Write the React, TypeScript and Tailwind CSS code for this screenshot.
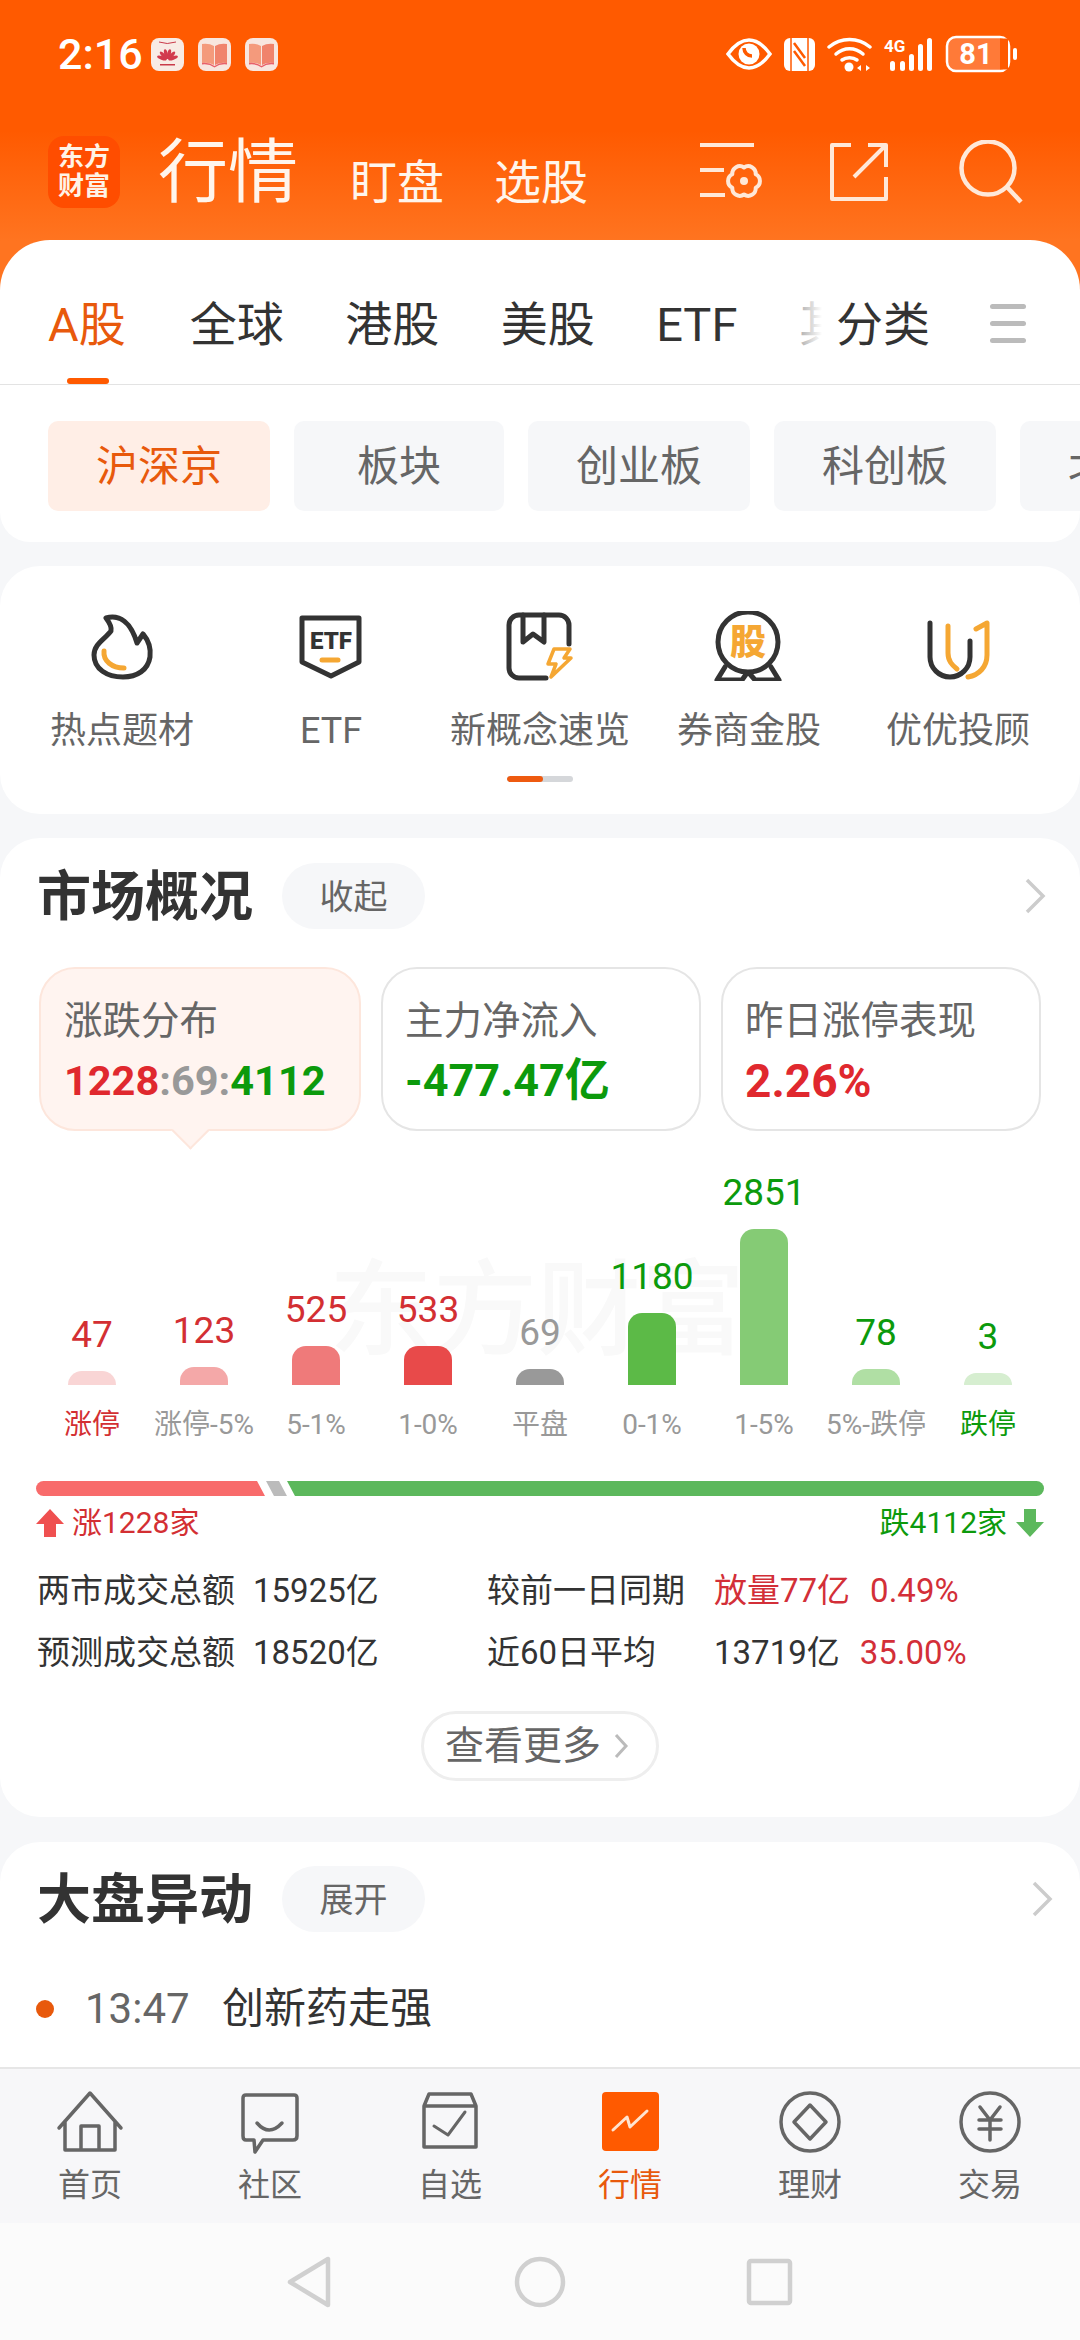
import React from "react";

const TABS = ["全球", "港股", "美股", "ETF", "其他"];
const CHIPS = ["板块", "创业板", "科创板"];

const BARS = [
  { v: "47", l: "涨停", h: 14, bar: "bg-[#f9d5d5]", vc: "text-[#d32f33]", lc: "text-[#d32f33]" },
  { v: "123", l: "涨停-5%", h: 18, bar: "bg-[#f4a8a8]", vc: "text-[#d32f33]", lc: "text-[#999999]" },
  { v: "525", l: "5-1%", h: 39, bar: "bg-[#ef7a7a]", vc: "text-[#d32f33]", lc: "text-[#999999]" },
  { v: "533", l: "1-0%", h: 39, bar: "bg-[#e84a4a]", vc: "text-[#d32f33]", lc: "text-[#999999]" },
  { v: "69", l: "平盘", h: 16, bar: "bg-[#999999]", vc: "text-[#999999]", lc: "text-[#999999]" },
  { v: "1180", l: "0-1%", h: 72, bar: "bg-[#5cba47]", vc: "text-[#0c9a0c]", lc: "text-[#999999]" },
  { v: "2851", l: "1-5%", h: 156, bar: "bg-[#85cb75]", vc: "text-[#0c9a0c]", lc: "text-[#999999]" },
  { v: "78", l: "5%-跌停", h: 16, bar: "bg-[#b0dfa4]", vc: "text-[#0c9a0c]", lc: "text-[#999999]" },
  { v: "3", l: "跌停", h: 12, bar: "bg-[#d6eed0]", vc: "text-[#0c9a0c]", lc: "text-[#0c9a0c]" },
];

const D = "#333333";
const O = "#f5a733";

function Flame() {
  return (
    <svg width="70" height="70" viewBox="0 0 70 70" fill="none" strokeLinecap="round" strokeLinejoin="round">
      <path d="M19 7C33 3 44 12 50 32C52 29 54 26 56 23C62 30 64 38 63 46C61 59 50 66 36 66C20 66 7 58 7 44C7 33 18 28 24 20C25 16 22 11 19 7Z" stroke={D} strokeWidth="5" />
      <path d="M17 40C16 50 25 57 37 57" stroke={O} strokeWidth="5" />
    </svg>
  );
}
function EtfIcon() {
  return (
    <svg width="70" height="70" viewBox="0 0 70 70" fill="none" strokeLinecap="round" strokeLinejoin="round">
      <path d="M6 7H63V51L35 65L6 51Z" stroke={D} strokeWidth="5" />
      <text x="35" y="38" textAnchor="middle" fontSize="24" fontWeight="900" fill={D} fontFamily="Roboto, sans-serif">ETF</text>
      <path d="M26 49H42" stroke={O} strokeWidth="5" />
    </svg>
  );
}
function BookIcon() {
  return (
    <svg width="70" height="70" viewBox="0 0 70 70" fill="none" strokeLinecap="round" strokeLinejoin="round">
      <path d="M64 33V14A10 10 0 0 0 54 4H14A10 10 0 0 0 4 14V57A10 10 0 0 0 14 67H41" stroke={D} strokeWidth="5" />
      <path d="M18 4V31L28 23L39 31V4" stroke={D} strokeWidth="5" />
      <path d="M49 38H65L59 47H66L46 66L51 53H43Z" stroke={O} strokeWidth="3.5" fill="#ffffff" />
    </svg>
  );
}
function BadgeIcon() {
  return (
    <svg width="70" height="70" viewBox="0 0 70 70" fill="none" strokeLinecap="round" strokeLinejoin="round">
      <circle cx="34" cy="31" r="30" stroke={D} strokeWidth="5" />
      <path d="M11 56L3 69H28L33 62M57 56L65 69H41L35 62" stroke={D} strokeWidth="5" />
      <text x="34" y="44" textAnchor="middle" fontSize="36" fontWeight="900" fill={O} fontFamily="'Noto Sans CJK SC', sans-serif">股</text>
    </svg>
  );
}
function UIcon() {
  return (
    <svg width="70" height="70" viewBox="0 0 70 70" fill="none" strokeLinecap="round" strokeLinejoin="round">
      <path d="M25 15V42C25 50 29 54 34 58" stroke={O} strokeWidth="5" />
      <path d="M7 12V46A20 20 0 0 0 47 46V30" stroke={D} strokeWidth="5" />
      <path d="M53 18L64 12V44C64 56 56 64 45 66" stroke={O} strokeWidth="5" />
    </svg>
  );
}

const GRID = [
  { l: "热点题材", I: Flame },
  { l: "ETF", I: EtfIcon },
  { l: "新概念速览", I: BookIcon },
  { l: "券商金股", I: BadgeIcon },
  { l: "优优投顾", I: UIcon },
];

const N = "#666666";
function NavHome() {
  return (
    <svg width="70" height="64" viewBox="0 0 70 64" fill="none" stroke={N} strokeWidth="3.5" strokeLinejoin="round" strokeLinecap="round">
      <path d="M4 38L35 3L66 38M10 31V60H60V31M26 60V36H44V60" />
    </svg>
  );
}
function NavChat() {
  return (
    <svg width="70" height="64" viewBox="0 0 70 64" fill="none" stroke={N} strokeWidth="3.5" strokeLinejoin="round" strokeLinecap="round">
      <path d="M11 5H59Q62 5 62 8V46Q62 50 58 50H28L20 62L19 50H11Q8 50 8 46V8Q8 5 11 5Z" />
      <path d="M22 33Q34 47 47 33" />
    </svg>
  );
}
function NavWatch() {
  return (
    <svg width="70" height="64" viewBox="0 0 70 64" fill="none" stroke={N} strokeWidth="3.5" strokeLinejoin="round" strokeLinecap="round">
      <path d="M9 16H61V57H9ZM9 16L14 4H56L61 16" />
      <path d="M19 36L33 45L50 22" strokeWidth="3" />
    </svg>
  );
}
function NavMarket() {
  return (
    <svg width="70" height="64" viewBox="0 0 70 64" fill="none">
      <rect x="7" y="2" width="57" height="59" rx="4" fill="#ff5a00" />
      <path d="M18 40L32 27L35 37L52 21" stroke="#ffe4d0" strokeWidth="3" strokeLinecap="round" strokeLinejoin="round" />
    </svg>
  );
}
function NavWealth() {
  return (
    <svg width="70" height="64" viewBox="0 0 70 64" fill="none" stroke={N} strokeWidth="3.5" strokeLinejoin="round">
      <circle cx="35" cy="32" r="29" />
      <path d="M35 15L51 32L35 49L19 32Z" />
    </svg>
  );
}
function NavTrade() {
  return (
    <svg width="70" height="64" viewBox="0 0 70 64" fill="none" stroke={N} strokeWidth="3.5" strokeLinejoin="round" strokeLinecap="round">
      <circle cx="35" cy="32" r="29" />
      <path d="M25 17L35 30L45 17M35 30V50M24 30H46M24 39H46" />
    </svg>
  );
}

const NAV = [
  { l: "首页", I: NavHome },
  { l: "社区", I: NavChat },
  { l: "自选", I: NavWatch },
  { l: "行情", I: NavMarket, active: true },
  { l: "理财", I: NavWealth },
  { l: "交易", I: NavTrade },
];

function HuaweiIcon() {
  const angles = [-70, -42, -14, 14, 42, 70];
  return (
    <svg width="33" height="33" viewBox="0 0 33 33">
      <rect width="33" height="33" rx="8" fill="#f8ebe5" />
      <path d="M8 4Q16 7 25 4" stroke="#c93a4a" strokeWidth="1" fill="none" />
      <g transform="translate(16.5 22)">
        {angles.map((a) => (
          <ellipse key={a} cx="0" cy="-6" rx="1.8" ry="5" fill="#d23a4e" transform={`rotate(${a})`} />
        ))}
      </g>
      <rect x="9" y="26" width="15" height="1.5" fill="#c93a4a" />
    </svg>
  );
}
function BookNote() {
  return (
    <svg width="33" height="33" viewBox="0 0 33 33">
      <rect width="33" height="33" rx="8" fill="#f8e6df" />
      <path d="M4 6Q11 5 16 8V27Q11 24 4 25Z" fill="#f49a7c" />
      <path d="M29 6Q22 5 17 8V27Q22 24 29 25Z" fill="#f0836c" />
      <path d="M4 25Q11 24 16.500 28Q22 24 29 25V26.500Q22 25.500 16.500 29.500Q11 25.500 4 26.500Z" fill="#e8606a" />
    </svg>
  );
}

function StatusRight() {
  return (
    <div className="flex items-center">
      <svg width="46" height="32" viewBox="0 0 46 32" fill="none">
        <path d="M2 16C10 5 18 2 23 2C28 2 36 5 44 16C36 27 28 30 23 30C18 30 10 27 2 16Z" stroke="#ffffff" strokeWidth="3.5" />
        <circle cx="23" cy="16" r="10.500" fill="#ffffff" />
        <path d="M18 10A8 8 0 0 0 26 18" stroke="#ff5a00" strokeWidth="3.5" />
      </svg>
      <svg className="ml-[12px]" width="31" height="33" viewBox="0 0 31 33" fill="none">
        <rect width="31" height="33" rx="6" fill="#ffffff" />
        <path d="M7 0V33M24 0V33" stroke="#ff5a00" strokeWidth="1.500" />
        <path d="M10 5L21 20M10 13L21 28" stroke="#ff5a00" strokeWidth="2.500" />
      </svg>
      <svg className="ml-[12px]" width="45" height="36" viewBox="0 0 45 36" fill="none" stroke="#ffffff" strokeLinecap="round">
        <path d="M2 11C14 1 31 1 43 11" strokeWidth="3.500" />
        <path d="M9 18C17 11 28 11 36 18" strokeWidth="3.500" />
        <path d="M15 24C19 21 26 21 30 24" strokeWidth="3.500" />
        <circle cx="22" cy="31" r="4.500" fill="#ffffff" stroke="none" />
        <path d="M34 29L30 32L34 35ZM39 29L43 32L39 35Z" fill="#ffffff" stroke="none" />
      </svg>
      <svg className="ml-[11px]" width="50" height="36" viewBox="0 0 50 36">
        <text x="1" y="16" fontSize="17" fontWeight="700" fill="#ffffff" fontFamily="Roboto, sans-serif">4G</text>
        <rect x="7" y="25" width="5" height="10" rx="2.500" fill="#ffffff" />
        <rect x="17" y="25" width="5" height="10" rx="2.500" fill="#ffffff" />
        <rect x="26" y="18" width="5" height="17" rx="2.500" fill="#ffffff" />
        <rect x="35" y="8" width="5" height="27" rx="2.500" fill="#ffffff" />
        <rect x="44" y="2" width="5" height="33" rx="2.500" fill="#ffffff" />
      </svg>
      <svg className="ml-[12px]" width="73" height="38" viewBox="0 0 73 38" fill="none">
        <rect x="2" y="2" width="62" height="34" rx="9" fill="#ff7a38" stroke="#ffffff" strokeWidth="2.500" />
        <rect x="55" y="3.500" width="8" height="31" fill="#ff5a00" />
        <text x="31" y="29" textAnchor="middle" fontSize="29" fontWeight="700" fill="#ffffff" fontFamily="Roboto, sans-serif">81</text>
        <rect x="68" y="13" width="4" height="12" rx="2" fill="#ffffff" />
      </svg>
    </div>
  );
}

const HC = "#ffe8d8";
function SettingsIcon() {
  return (
    <svg width="62" height="58" viewBox="0 0 62 58" fill="none" stroke={HC} strokeWidth="4">
      <path d="M0 2H54M0 27H24M0 52H25" />
      <path d="M44 24.500A7.500 7.500 0 0 1 55.700 31.250A7.500 7.500 0 0 1 55.700 44.750A7.500 7.500 0 0 1 44 51.500A7.500 7.500 0 0 1 32.300 44.750A7.500 7.500 0 0 1 32.300 31.250A7.500 7.500 0 0 1 44 24.500Z" strokeLinejoin="round" />
      <circle cx="44" cy="38" r="4" fill={HC} stroke="none" />
    </svg>
  );
}
function ShareIcon() {
  return (
    <svg width="58" height="58" viewBox="0 0 58 58" fill="none" stroke={HC} strokeWidth="4" strokeLinejoin="round">
      <path d="M21 2H2V56H56V34" />
      <path d="M38 2H56V24M24 34L55 3" />
    </svg>
  );
}
function SearchIcon() {
  return (
    <svg width="64" height="64" viewBox="0 0 64 64" fill="none" stroke={HC} strokeWidth="4.500">
      <circle cx="29" cy="28" r="26.500" />
      <path d="M48 47L62 62" />
    </svg>
  );
}

function Chevron({ className = "" }: { className?: string }) {
  return (
    <svg className={className} width="22" height="36" viewBox="0 0 22 36" fill="none" stroke="#cccccc" strokeWidth="3.500">
      <path d="M3 2L19 18L3 34" />
    </svg>
  );
}

function SectionHead({ title, pill, chevron }: { title: string; pill: string; chevron: string }) {
  return (
    <div className="flex items-center h-[66px] pl-[37px]">
      <div className="pt-[3px] text-[54px] leading-[66px] font-semibold text-[#333333]">{title}</div>
      <div className="ml-[29px] w-[143px] h-[66px] rounded-full bg-[#f6f7f9] flex items-center justify-center pt-[2px] text-[34px] leading-[64px] text-[#666666]">
        {pill}
      </div>
      <Chevron className={chevron} />
    </div>
  );
}

export default function App() {
  return (
    <div className="w-[1080px] h-[2340px] overflow-hidden flex flex-col bg-[#f6f7f9] [font-family:Roboto,'Noto_Sans_CJK_SC',sans-serif]">
      <div className="flex-1 min-h-0 overflow-hidden">
        {/* header */}
        <div className="h-[290px] bg-[linear-gradient(180deg,#ff5a00_0%,#ff5a00_45%,#ff7420_83%,#ff7420_100%)]">
          <div className="h-[108px] pl-[58px] pr-[62px] flex items-center">
            <div className="text-[43px] leading-[50px] font-medium text-white w-[93px]">2:16</div>
            <div className="flex gap-[14px]">
              <HuaweiIcon />
              <BookNote />
              <BookNote />
            </div>
            <div className="ml-auto">
              <StatusRight />
            </div>
          </div>
          <div className="mt-[28px] h-[72px] pl-[48px] pr-[57px] flex items-center text-[#fff5ec]">
            <div className="w-[72px] h-[72px] rounded-[16px] bg-[#ff4d00] flex items-center justify-center text-center text-[26px] leading-[29px] font-bold text-[#fff3e6]">
              东方<br />财富
            </div>
            <div className="ml-[38px] pt-[2px] text-[70px] leading-[72px]">行情</div>
            <div className="ml-[52px] pt-[22px] text-[47px] leading-[50px]">盯盘</div>
            <div className="ml-[50px] pt-[22px] text-[47px] leading-[50px]">选股</div>
            <div className="ml-auto flex items-center">
              <SettingsIcon />
              <div className="ml-[68px]"><ShareIcon /></div>
              <div className="ml-[71px]"><SearchIcon /></div>
            </div>
          </div>
        </div>

        {/* tabs panel */}
        <div className="relative -mt-[50px] bg-white rounded-t-[50px] rounded-b-[30px] h-[302px] overflow-hidden">
          <div className="h-[145px] border-b-[1px] border-[#e3e3e3] flex pt-[61px] items-start">
            <div className="relative w-[822px] overflow-hidden flex gap-[61.5px] pl-[48px] h-[83px] text-[47px] leading-[48px] text-[#333333]">
              <div className="relative shrink-0 mr-[2.5px] text-[#e8590c] h-[83px]">
                A股
                <div className="absolute left-[19px] bottom-0 w-[42px] h-[6px] rounded-full bg-[#ff5a00]" />
              </div>
              {TABS.map((t) => (
                <div key={t} className="shrink-0">{t}</div>
              ))}
              <div className="absolute right-0 top-0 w-[26px] h-[60px] bg-[linear-gradient(90deg,rgba(255,255,255,0.55),#ffffff)]" />
            </div>
            <div className="ml-[14px] text-[47px] leading-[48px] text-[#333333]">分类</div>
            <div className="ml-[60px] mt-[3px] w-[36px] flex flex-col gap-[12px]">
              <div className="h-[5px] rounded-full bg-[#bbbbbb]" />
              <div className="h-[5px] rounded-full bg-[#bbbbbb]" />
              <div className="h-[5px] rounded-full bg-[#bbbbbb]" />
            </div>
          </div>
          <div className="pt-[36px] pl-[48px] flex gap-[24px] text-[42px] text-[#666666]">
            <div className="shrink-0 w-[222px] h-[90px] rounded-[10px] bg-[#ffeee6] text-[#e8590c] flex items-center justify-center">沪深京</div>
            {CHIPS.map((c, i) => (
              <div
                key={c}
                className={
                  i === 0
                    ? "shrink-0 w-[210px] h-[90px] rounded-[10px] bg-[#f6f7f9] flex items-center justify-center"
                    : "shrink-0 w-[222px] h-[90px] rounded-[10px] bg-[#f6f7f9] flex items-center justify-center"
                }
              >
                {c}
              </div>
            ))}
            <div className="shrink-0 w-[222px] h-[90px] rounded-[10px] bg-[#f6f7f9] flex items-center justify-center">北交所</div>
          </div>
        </div>

        {/* icon grid */}
        <div className="mt-[24px] h-[248px] bg-white rounded-[40px] flex flex-col items-center">
          <div className="pt-[45px] px-[19px] w-full grid grid-cols-5 gap-[3px]">
            {GRID.map(({ l, I }) => (
              <div key={l} className="flex flex-col items-center">
                <I />
                <div className="mt-[27px] text-[36px] leading-[46px] text-[#666666] whitespace-nowrap">{l}</div>
              </div>
            ))}
          </div>
          <div className="mt-[22px] w-[66px] h-[6px] rounded-full bg-[#d5d7da] overflow-hidden">
            <div className="w-[36px] h-full rounded-full bg-[#ee5a10]" />
          </div>
        </div>

        {/* market overview */}
        <div className="mt-[24px] h-[979px] bg-white rounded-[40px] pt-[25px]">
          <SectionHead title="市场概况" pill="收起" chevron="ml-[599px]" />
          <div className="mt-[38px] pl-[39px] flex gap-[20px]">
            <div className="relative w-[322px] h-[164px] rounded-[36px] bg-[#fff4f0] border-[2px] border-[#fde6dc] pl-[23px] pt-[28px]">
              <div className="text-[38.5px] leading-[48px] text-[#666666]">涨跌分布</div>
              <div className="mt-[12px] text-[41.5px] leading-[48px] font-bold whitespace-nowrap">
                <span className="text-[#e0282e]">1228</span>
                <span className="text-[#999999]">:69:</span>
                <span className="text-[#0c9a0c]">4112</span>
              </div>
              <div className="absolute left-[136px] -bottom-[15px] w-[27px] h-[27px] rotate-45 bg-[#fff4f0] border-r-[2px] border-b-[2px] border-[#fde6dc]" />
            </div>
            <div className="w-[320px] h-[164px] rounded-[36px] bg-white border-[2px] border-[#e5e5e5] pl-[22px] pt-[28px]">
              <div className="text-[38.5px] leading-[48px] text-[#666666] whitespace-nowrap">主力净流入</div>
              <div className="mt-[12px] text-[45px] leading-[48px] font-bold text-[#0c9a0c] whitespace-nowrap">-477.47亿</div>
            </div>
            <div className="w-[320px] h-[164px] rounded-[36px] bg-white border-[2px] border-[#e5e5e5] pl-[22px] pt-[28px]">
              <div className="text-[38.5px] leading-[48px] text-[#666666] whitespace-nowrap">昨日涨停表现</div>
              <div className="mt-[12px] text-[46px] leading-[48px] font-bold text-[#e0282e]">2.26%</div>
            </div>
          </div>

          {/* chart */}
          <div className="relative h-[254px] pl-[36px] flex items-end">
            <div className="absolute left-[329px] top-[129px] text-[104px] leading-[104px] font-medium text-[#f9f9f9] whitespace-nowrap">东方财富</div>
            {BARS.map((b) => (
              <div key={b.l} className="relative w-[112px] flex flex-col items-center">
                <div className={`text-[37px] leading-[44px] ${b.vc}`}>{b.v}</div>
                <div className={`mt-[14px] w-[48px] rounded-t-[14px] ${b.bar}`} style={{ height: b.h }} />
              </div>
            ))}
          </div>
          <div className="mt-[22px] pl-[36px] flex">
            {BARS.map((b) => (
              <div key={b.l} className={`w-[112px] text-center text-[28px] leading-[36px] whitespace-nowrap ${b.lc}`}>{b.l}</div>
            ))}
          </div>

          {/* ratio bar */}
          <div className="mt-[38px] mx-[36px] h-[15px] flex">
            <div className="w-[229px] rounded-l-full bg-[#f86b6b] [clip-path:polygon(0_0,221px_0,100%_100%,0_100%)]" />
            <div className="ml-[1px] w-[29px] -mr-[8px] bg-[#bbbbbb] [clip-path:polygon(0_0,13px_0,21px_100%,8px_100%)]" />
            <div className="flex-1 rounded-r-full bg-[#5cb85c] [clip-path:polygon(0_0,100%_0,100%_100%,8px_100%)]" />
          </div>

          <div className="mt-[7px] px-[36px] h-[40px] flex items-center text-[30px] leading-[40px]">
            <svg width="28" height="30" viewBox="0 0 28 30"><path d="M14 1L28 16H20V29H8V16H0Z" fill="#ef5050" /></svg>
            <span className="ml-[8px] text-[#d32f33]">涨1228家</span>
            <span className="ml-auto text-[#0c9a0c]">跌4112家</span>
            <svg className="ml-[9px]" width="28" height="30" viewBox="0 0 28 30"><path d="M14 29L28 14H20V1H8V14H0Z" fill="#5cb85c" /></svg>
          </div>

          <div className="mt-[17px] pl-[37px] grid grid-cols-[216px_234px_227px_1fr] text-[33px] leading-[62px] text-[#333333] whitespace-nowrap">
            <div>两市成交总额</div>
            <div>15925亿</div>
            <div>较前一日同期</div>
            <div className="flex gap-[20px] text-[#d32f38]"><span>放量77亿</span><span>0.49%</span></div>
            <div>预测成交总额</div>
            <div>18520亿</div>
            <div>近60日平均</div>
            <div className="flex gap-[20px]"><span>13719亿</span><span className="text-[#d32f38]">35.00%</span></div>
          </div>

          <div className="mt-[27px] mx-auto w-[238px] h-[70px] rounded-full border-[3px] border-[#eeeeee] flex items-center pl-[21px] text-[39px] leading-[64px] text-[#666666]">
            查看更多
            <svg className="ml-[12px]" width="16" height="26" viewBox="0 0 16 26" fill="none" stroke="#bbbbbb" strokeWidth="3"><path d="M3 2L13 13L3 24" /></svg>
          </div>
        </div>

        {/* abnormal */}
        <div className="mt-[25px] h-[400px] bg-white rounded-t-[40px] pt-[24px]">
          <SectionHead title="大盘异动" pill="展开" chevron="ml-[606px]" />
          <div className="mt-[52px] pl-[36px] h-[50px] flex items-center">
            <div className="w-[18px] h-[18px] rounded-full bg-[#e8590c]" />
            <div className="ml-[31px] w-[137px] text-[42px] leading-[50px] text-[#666666]">13:47</div>
            <div className="text-[42px] leading-[50px] text-[#333333]">创新药走强</div>
          </div>
        </div>
      </div>

      {/* bottom nav */}
      <div className="h-[156px] shrink-0 bg-[#f7f7f9] border-t-[2px] border-[#e6e6e6] grid grid-cols-6 pt-[21px]">
        {NAV.map(({ l, I, active }) => (
          <div key={l} className="flex flex-col items-center">
            <I />
            <div className={active ? "mt-[9px] text-[32px] leading-[44px] text-[#e8590c]" : "mt-[9px] text-[32px] leading-[44px] text-[#666666]"}>{l}</div>
          </div>
        ))}
      </div>

      {/* system nav */}
      <div className="h-[117px] shrink-0 bg-[#fbfbfb] flex justify-center pt-[32px]">
        <svg width="520" height="54" viewBox="0 0 520 54" fill="none" stroke="#d0d0d0" strokeWidth="4.500" strokeLinejoin="round">
          <path d="M48 4V50L10 27Z" />
          <circle cx="260" cy="27" r="23" />
          <rect x="469" y="6" width="41" height="42" rx="2" />
        </svg>
      </div>
    </div>
  );
}
